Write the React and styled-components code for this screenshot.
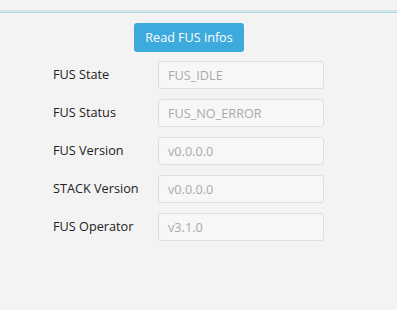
import React from "react";
import styled, { createGlobalStyle } from "styled-components";

const Global = createGlobalStyle`
  html, body { margin: 0; padding: 0; background: #f3f3f3; }
  body { font-family: "Open Sans", "Noto Sans", sans-serif; }
`;

const Page = styled.div`
  width: 397px;
  height: 310px;
  background: #f3f3f3;
  overflow: hidden;
`;

const TopBar = styled.div`
  height: 10px;
  border-bottom: 1px solid #dcdcdc;
`;

const Accent = styled.div`
  height: 2px;
  background: linear-gradient(#d6ecf3 0 1px, #a9d9ea 1px 2px);
`;

const Form = styled.div`
  margin-left: 53px;
  width: 271px;
  padding-top: 10px;
  display: flex;
  flex-direction: column;
`;

const ButtonRow = styled.div`
  display: flex;
  justify-content: center;
  margin-bottom: 9px;
`;

const Button = styled.button`
  width: 110px;
  height: 29px;
  background: #3caadd;
  border: none;
  border-radius: 3px;
  color: #ffffff;
  font-family: "Open Sans", "Noto Sans", sans-serif;
  font-size: 12.6px;
  padding: 0;
  margin-left: 1px;
  cursor: pointer;
`;

const Rows = styled.div`
  display: flex;
  flex-direction: column;
  gap: 10px;
`;

const Row = styled.div`
  display: flex;
  align-items: center;
  height: 28px;
`;

const Label = styled.span`
  width: 105px;
  font-size: 12.7px;
  color: #222;
  margin-top: -2px;
`;

const Field = styled.div`
  box-sizing: border-box;
  width: 166px;
  height: 28px;
  background: #f7f7f7;
  border: 1px solid #dedede;
  border-radius: 3px;
  padding: 0 9px;
  display: flex;
  align-items: center;
  font-size: 12.7px;
  color: #aaaaaa;
`;

const rows = [
  ["FUS State", "FUS_IDLE"],
  ["FUS Status", "FUS_NO_ERROR"],
  ["FUS Version", "v0.0.0.0"],
  ["STACK Version", "v0.0.0.0"],
  ["FUS Operator", "v3.1.0"],
];

export default function App() {
  return (
    <Page>
      <Global />
      <TopBar />
      <Accent />
      <Form>
        <ButtonRow>
          <Button>Read FUS infos</Button>
        </ButtonRow>
        <Rows>
          {rows.map(([l, v]) => (
            <Row key={l}>
              <Label>{l}</Label>
              <Field>{v}</Field>
            </Row>
          ))}
        </Rows>
      </Form>
    </Page>
  );
}
